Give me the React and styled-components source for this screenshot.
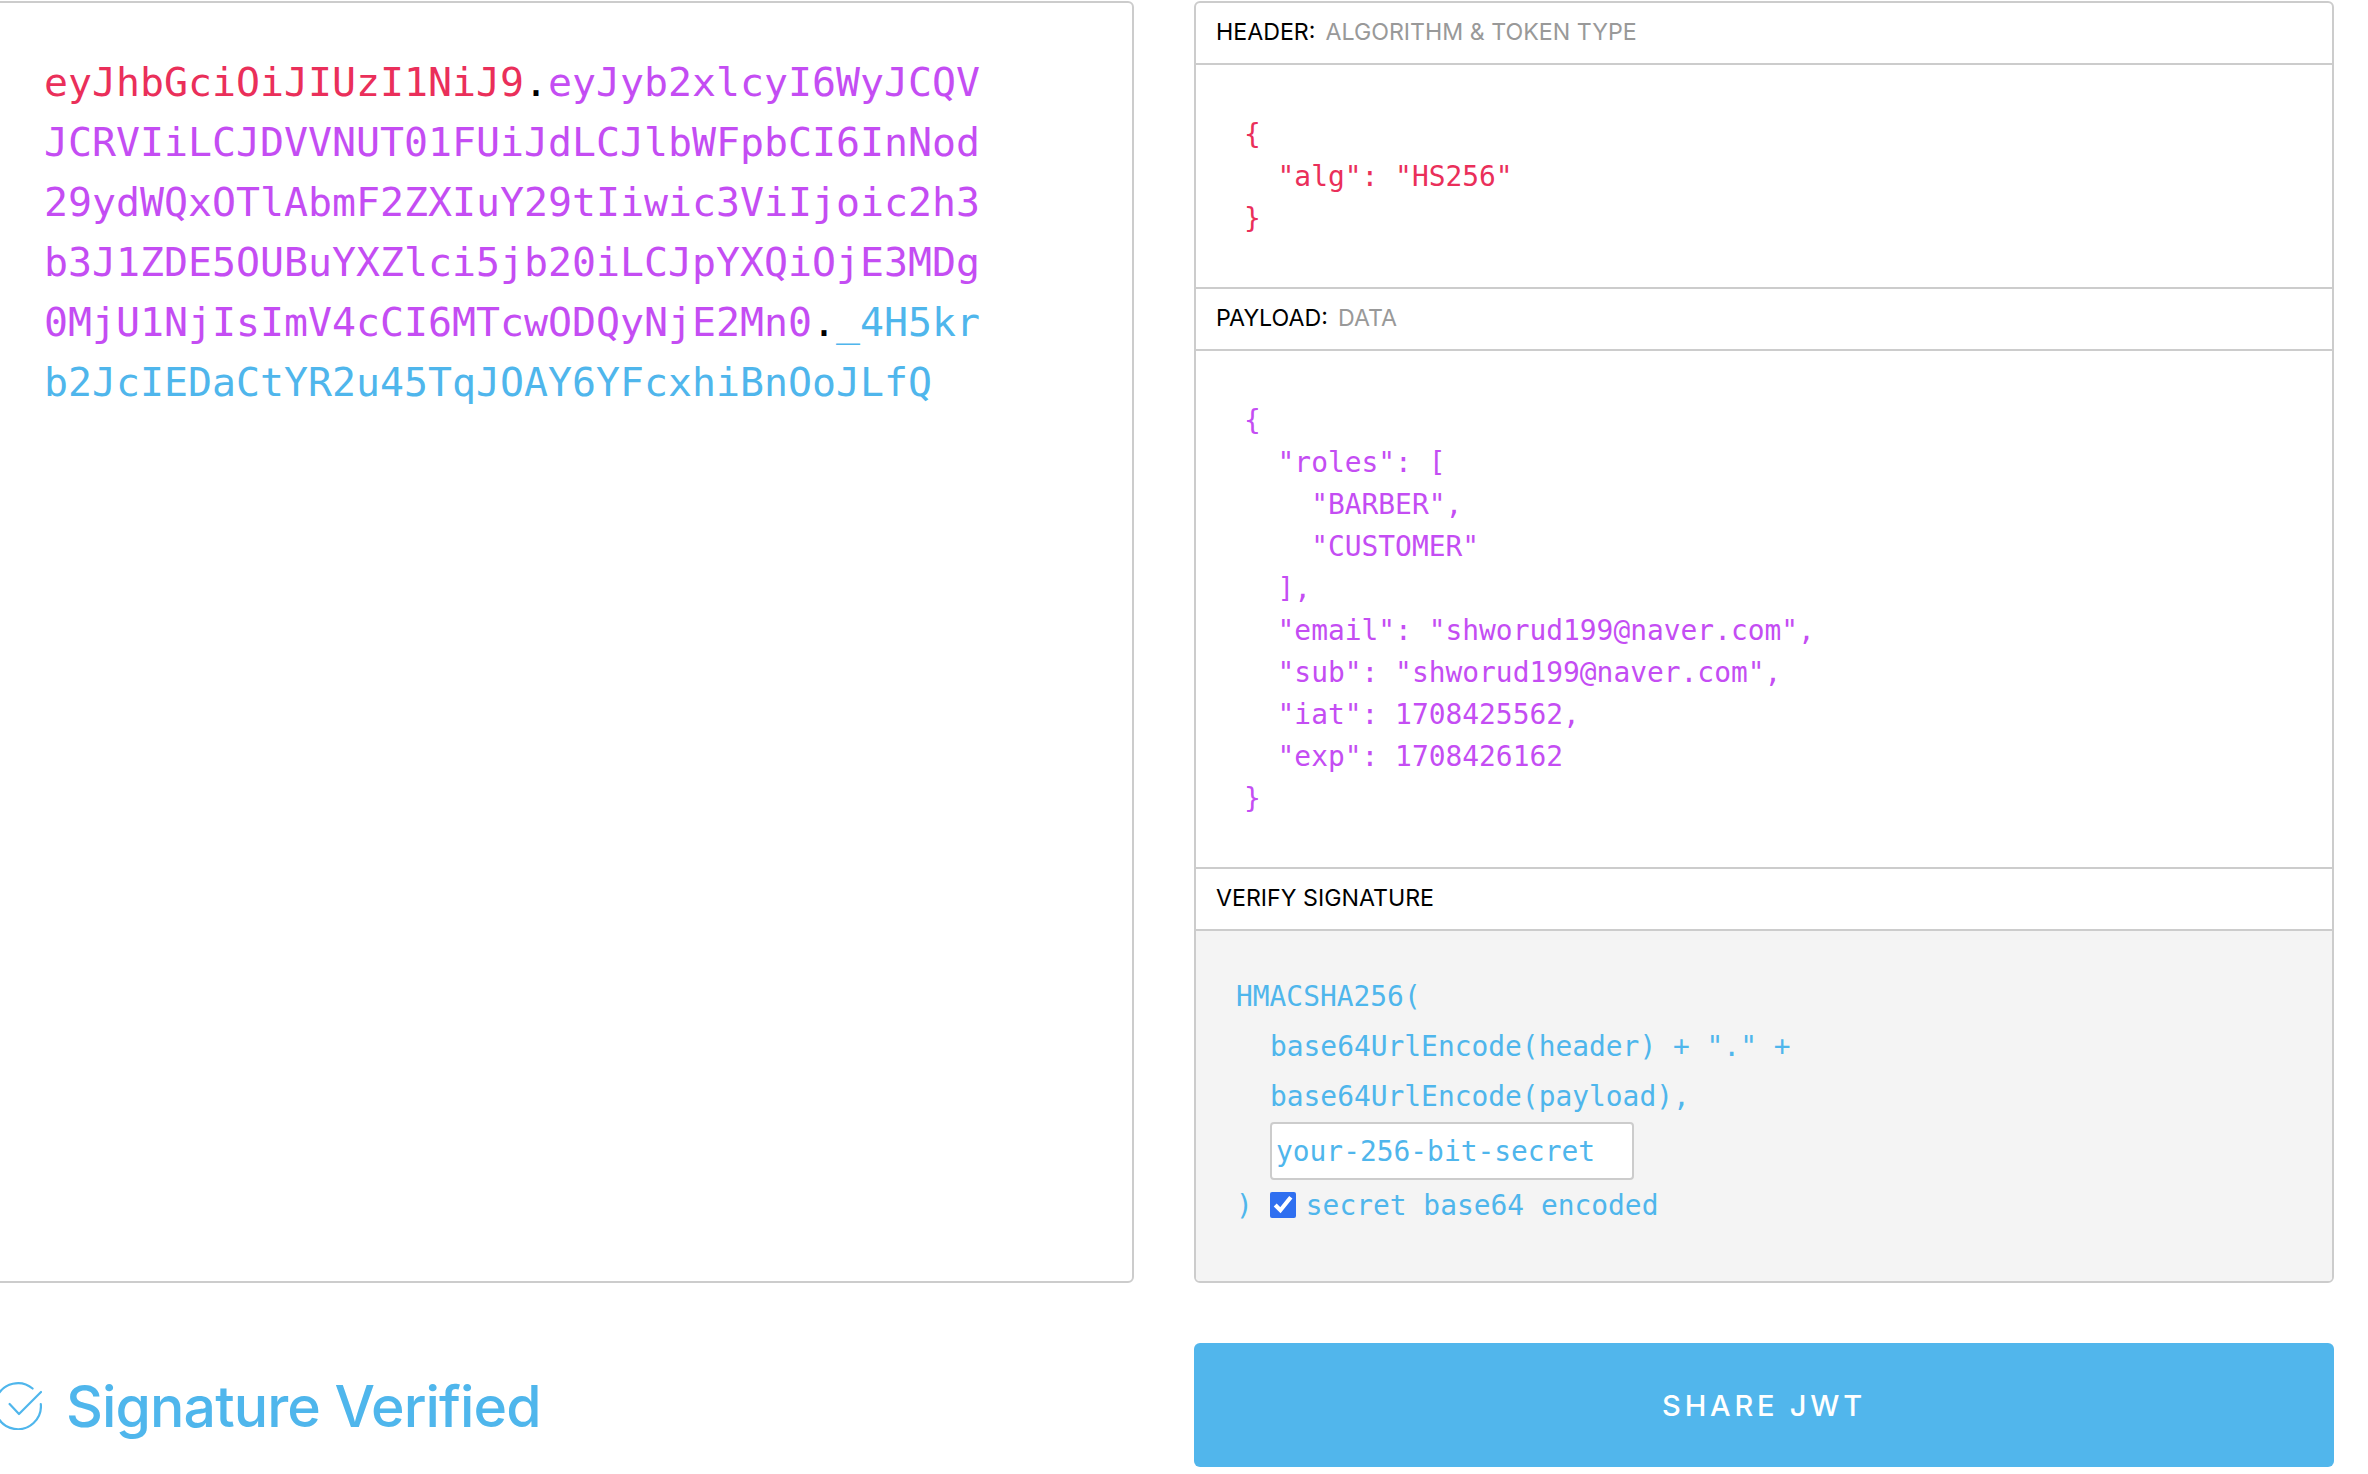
import React from 'react';
import styled, { createGlobalStyle } from 'styled-components';

const colors = {
  header: '#ea2f5a',
  payload: '#c44df3',
  signature: '#4fb6ec',
  line: '#cccccc',
};

const GlobalStyle = createGlobalStyle`
  html, body {
    margin: 0;
    padding: 0;
    background: #ffffff;
    overflow: hidden;
  }
`;

const Page = styled.div`
  display: grid;
  grid-template-columns: 1140px 1140px;
  grid-template-rows: 1282px 124px;
  column-gap: 60px;
  row-gap: 60px;
  margin-left: -6px;
  padding-top: 1px;
  font-family: Inter, 'Noto Sans', sans-serif;
`;

const Panel = styled.div`
  box-sizing: border-box;
  border: 2px solid ${colors.line};
  border-radius: 6px;
  background: #ffffff;
  overflow: hidden;
`;

const TokenPanel = styled(Panel)`
  padding: 49px 48px;
`;

const Token = styled.div`
  width: 940px;
  font-family: 'DejaVu Sans Mono', monospace;
  font-size: 39.87px;
  line-height: 60px;
  word-break: break-all;
`;

const Part = styled.span`
  color: ${({ $color }) => $color};
`;

const Dot = styled.span`
  color: #000000;
`;

const Sections = styled(Panel)`
  display: flex;
  flex-direction: column;
`;

const SectionHead = styled.div`
  box-sizing: border-box;
  display: flex;
  align-items: center;
  gap: 10px;
  height: 62px;
  padding: 0 0 2px 20px;
  border-bottom: 2px solid ${colors.line};
  font-size: 23.2px;
  color: #000000;
`;

const HeadNote = styled.span`
  color: #999999;
`;

const JsonBody = styled.pre`
  margin: 0;
  padding: 49px 48px 47px;
  border-bottom: 2px solid ${colors.line};
  font-family: 'DejaVu Sans Mono', monospace;
  font-size: 27.9px;
  line-height: 42px;
  color: ${({ $color }) => $color};
`;

const VerifyBody = styled.div`
  flex: 1;
  padding: 41px 40px 0;
  background: #f4f4f4;
  font-family: 'DejaVu Sans Mono', monospace;
  font-size: 27.9px;
  color: ${colors.signature};
`;

const CodeLine = styled.div`
  height: 50px;
  line-height: 50px;
  white-space: pre;
  padding-left: ${({ $indent }) => ($indent ? '34px' : '0')};
`;

const SecretInput = styled.input`
  display: block;
  box-sizing: border-box;
  width: 364px;
  height: 58px;
  margin: 0 0 0 34px;
  padding: 0 4px;
  border: 2px solid ${colors.line};
  border-radius: 4px;
  background: #ffffff;
  outline: none;
  font-family: inherit;
  font-size: inherit;
  color: inherit;
`;

const EncodedRow = styled.label`
  display: flex;
  align-items: center;
  height: 50px;
`;

const EncodedBox = styled.input`
  width: 26px;
  height: 26px;
  margin: 0 10px 0 17px;
  accent-color: #2f6ff0;
`;

const Verified = styled.div`
  display: flex;
  align-items: center;
  gap: 24px;
  padding-top: 2px;
  color: ${colors.signature};
  font-size: 57.2px;
  font-weight: 500;
  letter-spacing: -0.9px;
`;

const ShareButton = styled.button`
  border: 0;
  border-radius: 6px;
  background: #51b6ec;
  color: #ffffff;
  font-family: inherit;
  font-size: 29px;
  font-weight: 500;
  letter-spacing: 3.8px;
`;

const VerifiedIcon = () => (
  <svg width="48" height="48" viewBox="0 0 48 48" fill="none" stroke={colors.signature} strokeWidth="2.2" strokeLinecap="round" strokeLinejoin="round">
    <path d="M38.6 6.5A23 23 0 1 0 46.8 22" />
    <path d="M15.6 22 L25 32 L47 10" />
  </svg>
);

const payload = `{
  "roles": [
    "BARBER",
    "CUSTOMER"
  ],
  "email": "shworud199@naver.com",
  "sub": "shworud199@naver.com",
  "iat": 1708425562,
  "exp": 1708426162
}`;

const App = () => (
  <>
    <GlobalStyle />
    <Page>
      <TokenPanel>
        <Token>
          <Part $color={colors.header}>eyJhbGciOiJIUzI1NiJ9</Part>
          <Dot>.</Dot>
          <Part $color={colors.payload}>eyJyb2xlcyI6WyJCQVJCRVIiLCJDVVNUT01FUiJdLCJlbWFpbCI6InNod29ydWQxOTlAbmF2ZXIuY29tIiwic3ViIjoic2h3b3J1ZDE5OUBuYXZlci5jb20iLCJpYXQiOjE3MDg0MjU1NjIsImV4cCI6MTcwODQyNjE2Mn0</Part>
          <Dot>.</Dot>
          <Part $color={colors.signature}>_4H5krb2JcIEDaCtYR2u45TqJOAY6YFcxhiBnOoJLfQ</Part>
        </Token>
      </TokenPanel>
      <Sections>
        <SectionHead>
          HEADER:<HeadNote>ALGORITHM &amp; TOKEN TYPE</HeadNote>
        </SectionHead>
        <JsonBody $color={colors.header}>{`{
  "alg": "HS256"
}`}</JsonBody>
        <SectionHead>
          PAYLOAD:<HeadNote>DATA</HeadNote>
        </SectionHead>
        <JsonBody $color={colors.payload}>{payload}</JsonBody>
        <SectionHead>VERIFY SIGNATURE</SectionHead>
        <VerifyBody>
          <CodeLine>HMACSHA256(</CodeLine>
          <CodeLine $indent>base64UrlEncode(header) + "." +</CodeLine>
          <CodeLine $indent>base64UrlEncode(payload),</CodeLine>
          <SecretInput defaultValue="your-256-bit-secret" />
          <EncodedRow>
            )
            <EncodedBox type="checkbox" defaultChecked />
            secret base64 encoded
          </EncodedRow>
        </VerifyBody>
      </Sections>
      <Verified>
        <VerifiedIcon />
        Signature Verified
      </Verified>
      <ShareButton>SHARE JWT</ShareButton>
    </Page>
  </>
);

export default App;
